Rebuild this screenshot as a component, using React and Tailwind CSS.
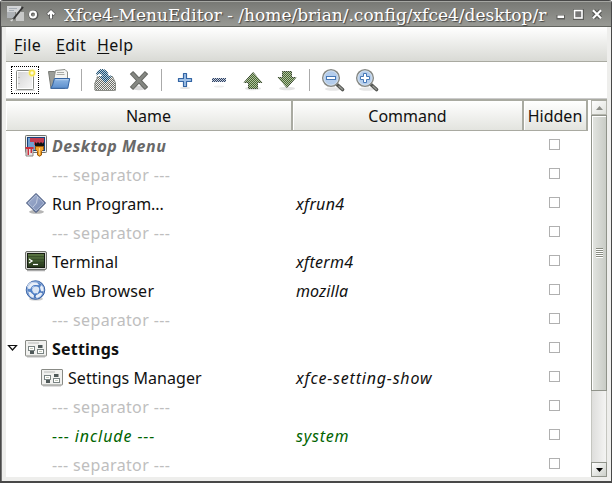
import React from "react";

/* Checkerboard mask that gives insensitive icons their stippled look */
function Stipple({ id }) {
  return (
    <defs>
      <pattern id={id} width="2" height="2" patternUnits="userSpaceOnUse">
        <rect x="0" y="0" width="1" height="1" fill="#fff" />
        <rect x="1" y="1" width="1" height="1" fill="#fff" />
      </pattern>
      <mask id={id + "-m"} maskUnits="userSpaceOnUse" x="0" y="0" width="24" height="24">
        <rect width="24" height="24" fill={`url(#${id})`} shapeRendering="crispEdges" />
      </mask>
    </defs>
  );
}

function Icon({ children }) {
  return (
    <svg width="24" height="24" viewBox="0 0 24 24" className="block shrink-0">
      {children}
    </svg>
  );
}

function NewIcon() {
  return (
    <Icon>
      <defs>
        <linearGradient id="doc" x1="0" y1="0" x2="1" y2="1">
          <stop offset="0" stopColor="#d6d6d6" />
          <stop offset="1" stopColor="#f6f6f6" />
        </linearGradient>
      </defs>
      <path d="M2 22.5h20" stroke="#d8d8d8" />
      <rect x="3.5" y="2.5" width="17" height="19" rx="1" fill="#fff" stroke="#888a85" />
      <rect x="5" y="4" width="14" height="16" fill="url(#doc)" />
      <path d="M5.5 9.5h1M5.5 15.5h1" stroke="#999" />
      <circle cx="19" cy="5" r="4.2" fill="#fff3a0" opacity=".55" />
      <circle cx="19" cy="5" r="2.4" fill="#fffce0" stroke="#f4e34c" strokeWidth="1.5" />
    </Icon>
  );
}

function OpenIcon() {
  return (
    <Icon>
      <defs>
        <linearGradient id="fold" x1="0" y1="0" x2="0" y2="1">
          <stop offset="0" stopColor="#8fb7e4" />
          <stop offset="1" stopColor="#5c8fcd" />
        </linearGradient>
      </defs>
      <path d="M1.5 3.5h6l1 2h9v15H4z" fill="#9b9d98" stroke="#777974" />
      <path d="M6 16L8.5 2.5l9.5-1L20.5 4v12z" fill="#f4f4f2" stroke="#8c8e89" />
      <path d="M10 4.5h7M9.5 6.5h8" stroke="#a9aba6" />
      <path d="M7.5 10.5h15.2L20.8 20.3H3.8L5.6 17z" fill="url(#fold)" stroke="#3465a4" strokeLinejoin="round" />
      <path d="M8.3 11.7h13.1" stroke="#b9d2ee" />
    </Icon>
  );
}

function SaveIcon() {
  return (
    <Icon>
      <Stipple id="sv" />
      <path d="M4.5 9.5h15l3 6v6.5H1.5v-6.5z" fill="#eeeeec" />
      <g mask="url(#sv-m)">
        <path d="M4 8.5h15.5l3 7v7H1.5v-7z" fill="#6b6d67" />
      </g>
      <path d="M5 8.5l-3 6.5v7q0 .5.7.5h19q.8 0 .8-.5v-7l-3-6.5h-3" fill="none" stroke="#8b8d87" />
      <path d="M3.5 7C3.5 3 6 1.5 9 1.5c4 0 6 2.5 6 6.5h3.5L12.5 15 6.5 8.5h3C9.5 5.5 7 4.5 3.5 7z" fill="#b9cdd9" />
      <g mask="url(#sv-m)">
        <path d="M3.5 7C3.5 3 6 1.5 9 1.5c4 0 6 2.5 6 6.5h3.5L12.5 15 6.5 8.5h3C9.5 5.5 7 4.5 3.5 7z" fill="#194f77" stroke="#24506c" />
      </g>
    </Icon>
  );
}

function CloseIcon() {
  return (
    <Icon>
      <ellipse cx="12" cy="20" rx="8" ry="2.2" fill="#d9d9d9" />
      <path d="M6 6.2L18 18.8M18 6.2L6 18.8" stroke="#666864" strokeWidth="4.6" strokeLinecap="square" />
      <path d="M6 6.2L18 18.8M18 6.2L6 18.8" stroke="#858782" strokeWidth="2.6" strokeLinecap="square" />
    </Icon>
  );
}

function AddIcon() {
  return (
    <Icon>
      <ellipse cx="12" cy="20" rx="5" ry="1" fill="#e2e2e2" />
      <path d="M10.5 5.5h3v5h5v3h-5v5h-3v-5h-5v-3h5z" fill="#9fc0e6" stroke="#3465a4" strokeWidth="1.2" strokeLinejoin="round" />
    </Icon>
  );
}

function RemoveIcon() {
  return (
    <Icon>
      <Stipple id="rm" />
      <ellipse cx="12" cy="18.5" rx="5" ry="1" fill="#ededed" />
      <rect x="5" y="10" width="14" height="4" fill="#c6cedb" />
      <g mask="url(#rm-m)">
        <rect x="5" y="10" width="14" height="4" fill="#2f4265" />
      </g>
    </Icon>
  );
}

function ArrowIcon({ id, down }) {
  const d = down ? "M7.5 3.5h9v6h4.300L12 19.500 3.200 9.500h4.300z" : "M12 4.500l8.800 10h-4.300v6h-9v-6H3.200z";
  return (
    <Icon>
      <Stipple id={id} />
      <ellipse cx="12" cy="20.5" rx="8" ry="1.7" fill="#e3e3e3" />
      <path d={d} fill="#b3c2a4" stroke="#a3ad9a" />
      <g mask={`url(#${id}-m)`}>
        <path d={d} fill="#48682f" stroke="#34452a" />
      </g>
    </Icon>
  );
}

function ZoomIcon({ plus }) {
  return (
    <Icon>
      <ellipse cx="12" cy="21" rx="8" ry="1.8" fill="#e6e6e6" />
      <path d="M16.5 17l5 4.5" stroke="#555753" strokeWidth="3.6" strokeLinecap="round" />
      <path d="M18 18.2l3.3 3" stroke="#9b9d98" strokeWidth="1.3" strokeLinecap="round" />
      <circle cx="10" cy="10" r="8.3" fill="#b4cdec" stroke="#888a85" strokeWidth="1.5" />
      <circle cx="10" cy="10" r="7.1" fill="none" stroke="#dce4ec" strokeWidth=".8" />
      {plus ? (
        <path d="M8.5 5.5h3v3h3v3h-3v3h-3v-3h-3v-3h3z" fill="#fff" stroke="#4678b6" />
      ) : (
        <rect x="5.5" y="8.5" width="9" height="3" fill="#fff" stroke="#4678b6" />
      )}
    </Icon>
  );
}

function DesktopIcon() {
  return (
    <Icon>
      <rect x="1.5" y="1.5" width="21" height="17" rx=".8" fill="#eeeeec" stroke="#70726d" />
      <rect x="3.5" y="3.5" width="17" height="13" fill="#729fcf" stroke="#17417d" />
      <path d="M6 4h14v5h-2v3h-2v-2h-3v1h-3V8H6z" fill="#c43c50" />
      <path d="M2 14h7v8H2z" fill="#e9e4e2" stroke="#8b8583" />
      <path d="M1.5 13h8v2H8v4H6.5v-4H5v6H3.5v-6h-2z" fill="#cc2e3e" />
      <path d="M11 8l1.5 1.5L14 8l1.5 1.5L17 8l1.5 1.5L20 8v4.5h-9z" fill="#111" />
      <path d="M11.5 12.5h8v3l-2 2v3.5q-2 2.4-4 0v-3.5l-2-2z" fill="#f0a32d" stroke="#9c5908" />
      <path d="M15.5 14v6.5" stroke="#ffd58b" />
    </Icon>
  );
}

function RunIcon() {
  return (
    <Icon>
      <defs>
        <linearGradient id="run" x1="0" y1="0" x2="1" y2="1">
          <stop offset="0" stopColor="#a3b1d0" />
          <stop offset="1" stopColor="#7789b3" />
        </linearGradient>
      </defs>
      <ellipse cx="12.5" cy="19.8" rx="7.5" ry="2" fill="#b5b5b5" />
      <path d="M12 1.5L21.5 11 12 20.5 2.5 11z" fill="url(#run)" stroke="#35476f" />
      <path d="M12 3.2L19.8 11 12 18.8 4.2 11z" fill="none" stroke="#b9c5dc" strokeWidth=".8" />
      <path d="M13.5 5l-1 6-3.5 4" stroke="#c4cee1" fill="none" />
    </Icon>
  );
}

function TerminalIcon() {
  return (
    <Icon>
      <defs>
        <linearGradient id="term" x1="0" y1="0" x2="0" y2="1">
          <stop offset="0" stopColor="#5c7743" />
          <stop offset=".5" stopColor="#415a30" />
          <stop offset="1" stopColor="#243419" />
        </linearGradient>
      </defs>
      <path d="M3 20.5h18" stroke="#aaa" strokeWidth="1.5" />
      <rect x="1.5" y="1.5" width="21" height="18" rx="1.5" fill="#d8d9d6" stroke="#70726d" />
      <rect x="3.5" y="3.5" width="17" height="14" fill="url(#term)" stroke="#171d12" />
      <path d="M4 6.5h16M4 9.5h16M4 12.5h16" stroke="#2d4220" strokeWidth=".6" />
      <path d="M5 9l3 2-3 2" fill="none" stroke="#fff" strokeWidth="1.3" />
      <path d="M9 14.5h5" stroke="#fff" strokeWidth="1.2" />
    </Icon>
  );
}

function GlobeIcon() {
  return (
    <Icon>
      <defs>
        <radialGradient id="globe" cx=".4" cy=".35" r=".7">
          <stop offset="0" stopColor="#7fa9e0" />
          <stop offset="1" stopColor="#2c5ba6" />
        </radialGradient>
      </defs>
      <ellipse cx="12" cy="20" rx="7" ry="1.6" fill="#ccc" />
      <circle cx="11.5" cy="11" r="9.3" fill="url(#globe)" stroke="#2a559c" strokeWidth=".8" />
      <path d="M8 3l5 .5 2 2.5-4 .5-3 3-3.5.5L3 7.5C4 5 6 3.500 8 3zM17 6l2.5 2 .5 4-2.5.5-2-2.5zM4 12.5l4 1 2 3-.5 2.8L6 17.5zM13 14.500l4-1 1.5 1-2 3-3.5 2-1.5-2z" fill="#e9eff8" />
      <path d="M8 11c1-4 6-4.500 8-1.500l-2 4.500-4 .5z" fill="#dbe6f5" />
      <circle cx="11.5" cy="11" r="4.500" fill="none" stroke="#4a7cc4" strokeWidth="1.2" />
      <circle cx="11.5" cy="11" r="8.3" fill="none" stroke="#a7c2e8" strokeWidth=".7" />
    </Icon>
  );
}

function SettingsIcon() {
  return (
    <Icon>
      <path d="M3 20h18" stroke="#bbb" />
      <rect x="1.5" y="3.5" width="21" height="15.5" rx=".5" fill="#f1f1ef" stroke="#888a85" />
      <path d="M4 6h11" stroke="#cfd0cd" strokeWidth="1.6" />
      <rect x="4.5" y="9.5" width="6" height="4" fill="#fff" stroke="#7a8483" />
      <path d="M6 15.5h4" stroke="#4f5959" strokeWidth="3" />
      <path d="M14 9.500h4.5" stroke="#4f5959" strokeWidth="3" />
      <rect x="13.5" y="12.5" width="6" height="4" fill="#fff" stroke="#7a8483" />
      <path d="M6 11.5h3M15 14.5h3" stroke="#c3c8b8" />
    </Icon>
  );
}

const sep = { name: "--- separator ---", nameClass: "text-[#bebebe] tracking-[0.36px]" };

const rows = [
  { icon: <DesktopIcon />, name: "Desktop Menu", nameClass: "font-bold italic text-[#696969] tracking-[0.5px]" },
  sep,
  { icon: <RunIcon />, name: "Run Program...", nameClass: "tracking-[-0.05px]", command: "xfrun4", commandClass: "tracking-[0.3px]" },
  sep,
  { icon: <TerminalIcon />, name: "Terminal", nameClass: "tracking-[0.1px]", command: "xfterm4", commandClass: "tracking-[0.3px]" },
  { icon: <GlobeIcon />, name: "Web Browser", nameClass: "tracking-[0.25px]", command: "mozilla", commandClass: "tracking-[0.1px]" },
  sep,
  { icon: <SettingsIcon />, name: "Settings", nameClass: "font-bold tracking-[0.2px]", expander: true },
  { icon: <SettingsIcon />, name: "Settings Manager", nameClass: "tracking-[0.05px]", indent: true, command: "xfce-setting-show", commandClass: "tracking-[0.8px]" },
  sep,
  { name: "--- include ---", nameClass: "italic text-[#006400] tracking-[0.9px]", command: "system", commandClass: "text-[#006400] tracking-[0.8px]" },
  sep,
];

function Row({ row }) {
  return (
    <div className="flex h-[29px] shrink-0 items-center">
      <div className="flex w-[287px] items-center">
        <div className="flex w-[18px] shrink-0 justify-start pl-[1px]">
          {row.expander && (
            <svg width="12" height="12" viewBox="0 0 12 12">
              <path d="M1.500 2.500h8L5.500 7z" fill="#fff" stroke="#111" strokeWidth="1.200" />
            </svg>
          )}
        </div>
        {row.indent && <div className="w-4 shrink-0" />}
        <div className="w-7 shrink-0">{row.icon}</div>
        <span className={"whitespace-pre " + (row.nameClass || "")}>{row.name}</span>
      </div>
      <div className="w-[231px] pl-[3px]">
        <span className={"italic " + (row.commandClass || "")}>{row.command}</span>
      </div>
      <div className="w-16 pl-[25px]">
        <div className="mb-[3px] h-[11px] w-[11px] border border-[#b0b0b0] bg-white" />
      </div>
    </div>
  );
}

function Header({ className, children }) {
  return (
    <div className={"flex h-[31px] items-center justify-center border-t border-b border-r-2 border-t-[#a9aaa1] border-b-[#a9aaa1] border-r-[#a9aaa1] bg-linear-to-b from-white to-[#e3e4df] shadow-[inset_1px_1px_0_#fff] " + className}>
      {children}
    </div>
  );
}

function ToolButton({ focused, children }) {
  return (
    <div className="flex w-[34px] justify-center">
      <div className={"flex h-7 w-7 items-center justify-center " + (focused ? "border border-dotted border-black" : "")}>
        {children}
      </div>
    </div>
  );
}

function ToolSeparator() {
  return (
    <div className="flex w-3 pl-[5px]">
      <div className="h-[22px] w-px bg-[#aaa]" />
    </div>
  );
}

function TitleBar() {
  return (
    <div className="flex h-[27px] shrink-0 items-center border-t border-b border-t-[#484848] border-b-[#62645f] bg-linear-to-b from-[#777874] to-[#989994] shadow-[inset_0_1px_0_#a5a6a2]">
      <svg width="63" height="25" viewBox="0 0 63 25" className="block shrink-0">
        <path d="M6 5h14v6H6z" fill="#d2d4d6" />
        <path d="M6 11h8v6H6z" fill="#aeb2b6" />
        <path d="M15 11h8v9h-8z" fill="#c8c9c8" />
        <path d="M8 7.5h8M8 9.5h5" stroke="#a6adb4" />
        <path d="M22 6L12 18.5" stroke="#333" strokeWidth="2" />
        <path d="M9 19.5l4-2-2 3z" fill="#ddd" />
        <circle cx="32.5" cy="14" r="3.2" fill="none" stroke="#555" strokeWidth="3.5" />
        <circle cx="32" cy="13.5" r="3" fill="none" stroke="#fff" strokeWidth="2" />
        <path d="M50 18v-7M46.5 14l3.5-3.5 3.5 3.5" fill="none" stroke="#555" strokeWidth="3.5" />
        <path d="M50 17.5V11M46.8 13.5L50 10.3l3.2 3.2" fill="none" stroke="#fff" strokeWidth="2" />
      </svg>
      <div className="w-[484px] shrink-0 overflow-hidden whitespace-pre pt-[3px] font-['DejaVu_Serif','Liberation_Serif',serif] text-[17px] leading-[22px] text-white [text-shadow:1px_1px_1px_#444]">
        Xfce4-MenuEditor - /home/brian/.config/xfce4/desktop/r
      </div>
      <svg width="62" height="25" viewBox="0 0 62 25" className="block shrink-0">
        <path d="M8.5 14H17v4.5H8.5zM25 8h11v11H25z" fill="#5c5d5a" />
        <rect x="9.5" y="14.5" width="6.5" height="2.5" fill="#fff" />
        <rect x="26.5" y="9.5" width="7.5" height="7.5" fill="#777" stroke="#fff" strokeWidth="1.6" />
        <path d="M45.5 9.8l7 7M52.5 9.8l-7 7" stroke="#5c5d5a" strokeWidth="4.5" />
        <path d="M45 9.3l8 8M53 9.3l-8 8" stroke="#fff" strokeWidth="2" />
      </svg>
    </div>
  );
}

function ScrollBar() {
  return (
    <div className="flex w-4 shrink-0 flex-col border-t border-t-[#a9aaa1]">
      <div className="flex h-[14px] items-center justify-center border border-t-0 border-[#b5b6ae] bg-linear-to-br from-white to-[#dfe1dc]">
        <svg width="7" height="4" viewBox="0 0 7 4">
          <path d="M3.500 0L7 4H0z" fill="#8d8e88" />
        </svg>
      </div>
      <div className="flex h-[276px] items-center justify-center border border-[#90938a] bg-linear-to-r from-[#e3e5e1] to-[#c9ccc6] shadow-[inset_1px_1px_0_#fff]">
        <svg width="7" height="10" viewBox="0 0 7 10">
          <path d="M0 .5h7M0 2.5h7M0 4.5h7M0 6.5h7M0 8.5h7" stroke="#888b80" />
          <path d="M0 1.5h7M0 3.5h7M0 5.5h7M0 7.5h7M0 9.5h7" stroke="#fff" />
        </svg>
      </div>
      <div className="grow border-r border-l border-[#c5c6c0] bg-linear-to-r from-[#dededc] to-[#f4f4f3]" />
      <div className="flex h-[15px] items-center justify-center border border-[#90938a] bg-linear-to-br from-white to-[#cdd0ca]">
        <svg width="7" height="4" viewBox="0 0 7 4">
          <path d="M3.500 4L7 0H0z" fill="#000" />
        </svg>
      </div>
    </div>
  );
}

export default function App() {
  return (
    <div className="flex h-[483px] w-[612px] flex-col overflow-hidden rounded-t-[3px] border-x border-b-2 border-[#484848] bg-[#eeeeec] font-['Noto_Sans','Open_Sans',sans-serif] text-[16px] leading-5 text-[#111]">
      <TitleBar />
      <div className="flex min-h-0 grow flex-col border-l border-l-[#777] px-1 pb-1">
        <div className="flex h-[35px] shrink-0 items-center gap-3 border-b border-[#a9aaa1] bg-linear-to-b from-white to-[#d9dad5] pt-0.5 pl-2 tracking-[0.4px]">
          <span className="w-[30px]"><u className="underline-offset-2">F</u>ile</span>
          <span className="w-[29px]"><u className="underline-offset-2">E</u>dit</span>
          <span><u className="underline-offset-2">H</u>elp</span>
        </div>
        <div className="flex h-[37px] shrink-0 items-center border-b border-[#ccc] bg-white pl-[2px]">
          <ToolButton focused><NewIcon /></ToolButton>
          <ToolButton><OpenIcon /></ToolButton>
          <ToolSeparator />
          <ToolButton><SaveIcon /></ToolButton>
          <ToolButton><CloseIcon /></ToolButton>
          <ToolSeparator />
          <ToolButton><AddIcon /></ToolButton>
          <ToolButton><RemoveIcon /></ToolButton>
          <ToolButton><ArrowIcon id="up" /></ToolButton>
          <ToolButton><ArrowIcon id="dn" down /></ToolButton>
          <ToolSeparator />
          <ToolButton><ZoomIcon /></ToolButton>
          <ToolButton><ZoomIcon plus /></ToolButton>
        </div>
        <div className="flex min-h-0 grow border-t border-[#a9aaa1] bg-white">
          <div className="flex min-w-0 grow flex-col overflow-hidden">
            <div className="flex shrink-0">
              <Header className="w-[287px]">Name</Header>
              <Header className="w-[231px]">Command</Header>
              <Header className="w-16">Hidden</Header>
            </div>
            {rows.map((row, i) => (
              <Row key={i} row={row} />
            ))}
          </div>
          <ScrollBar />
        </div>
      </div>
    </div>
  );
}
